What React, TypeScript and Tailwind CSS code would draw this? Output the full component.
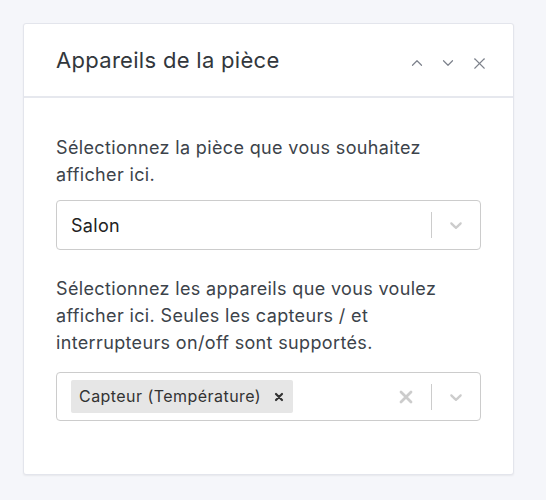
import { ChevronUp, ChevronDown, X } from 'lucide-react'

function Chevron() {
  return (
    <svg width="20" height="20" viewBox="0 0 20 20" className="text-[#cccccc]" fill="currentColor">
      <path d="M4.516 7.548c0.436-0.446 1.043-0.481 1.576 0l3.908 3.747 3.908-3.747c0.533-0.481 1.141-0.446 1.574 0 0.436 0.445 0.408 1.197 0 1.615-0.406 0.418-4.695 4.502-4.695 4.502-0.217 0.223-0.502 0.335-0.787 0.335s-0.57-0.112-0.789-0.335c0 0-4.287-4.084-4.695-4.502s-0.436-1.17 0-1.615z" />
    </svg>
  )
}

export default function App() {
  return (
    <div className="min-h-[500px] bg-[#f5f6fa] pt-[23px] pl-[23px] font-['Inter',sans-serif]">
      <div className="w-[491px] h-[452px] bg-white border border-[#e3e5ec] rounded-[3px] shadow-[0_1px_2px_rgba(0,0,0,0.06)]">
        <div className="h-[74px] flex items-center justify-between pl-[32px] pr-[24px] border-b-2 border-[#e6e8ee]">
          <h2 className="text-[22px] text-[#32373c] tracking-[0.3px] pt-[1px]">Appareils de la pièce</h2>
          <div className="flex items-center gap-[13px] text-[#7d828c] pt-[6px]">
            <ChevronUp className="w-[18px] h-[18px]" strokeWidth={1.6} />
            <ChevronDown className="w-[18px] h-[18px]" strokeWidth={1.6} />
            <X className="w-[19px] h-[19px]" strokeWidth={1.4} />
          </div>
        </div>

        <div className="px-[32px] pt-[36px] text-[18px] leading-[27px] text-[#3c434a]">
          <p className="tracking-[0.35px]">Sélectionnez la pièce que vous souhaitez afficher ici.</p>

          <div className="mt-[12px] h-[50px] border border-[#cccccc] rounded-[4px] flex items-center">
            <span className="flex-1 pl-[14px] text-[#222] tracking-[0.3px]">Salon</span>
            <span className="w-px h-[26px] bg-[#cccccc]" />
            <span className="px-[14px] flex items-center"><Chevron /></span>
          </div>

          <p className="mt-[25px] tracking-[0.35px]">
            Sélectionnez les appareils que vous voulez afficher ici. Seules les capteurs / et interrupteurs on/off sont supportés.
          </p>

          <div className="mt-[16px] h-[49px] border border-[#cccccc] rounded-[4px] flex items-center">
            <div className="flex-1 pl-[14px]">
              <span className="inline-flex items-center h-[33px] bg-[#e6e6e6] rounded-[2px] pl-[8px] pr-[4px] text-[16px] text-[#333] tracking-[0.45px]">
                Capteur (Température)
                <span className="ml-[8px] px-[4px] flex items-center text-[#333]">
                  <svg width="12" height="12" viewBox="0 0 12 12" stroke="currentColor" strokeWidth="2.2" strokeLinecap="round">
                    <path d="M3 3l6 6M9 3l-6 6" />
                  </svg>
                </span>
              </span>
            </div>
            <span className="pl-[8px] pr-[17px] flex items-center text-[#cccccc]">
              <svg width="16" height="16" viewBox="0 0 16 16" stroke="currentColor" strokeWidth="2.8" strokeLinecap="round">
                <path d="M3 3l10 10M13 3L3 13" />
              </svg>
            </span>
            <span className="w-px h-[26px] bg-[#cccccc]" />
            <span className="px-[14px] flex items-center"><Chevron /></span>
          </div>
        </div>
      </div>
    </div>
  )
}
